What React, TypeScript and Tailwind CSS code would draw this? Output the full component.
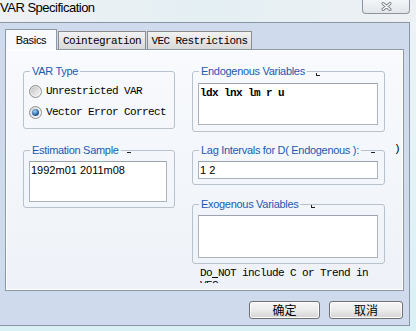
import type { ReactNode } from "react";

const mono = "font-['Liberation_Mono','DejaVu_Sans_Mono',monospace] text-[11px] tracking-[-0.6px] leading-[12px] text-black";
const sans = "font-['Liberation_Sans',Arial,sans-serif]";

function Radio({ checked, label }: { checked?: boolean; label: string }) {
  return (
    <div className="flex h-[20px] items-center pl-[5px]">
      <span className="flex h-[13px] w-[13px] items-center justify-center rounded-full border border-[#8e8f8f] bg-gradient-to-br from-[#d6d6d6] to-[#fdfdfd]">
        {checked ? (
          <span className="h-[7px] w-[7px] rounded-full bg-[radial-gradient(circle_at_40%_35%,#a6d6f7,#2f6aa6_55%,#0f3560)]" />
        ) : (
          <span className="h-[9px] w-[9px] rounded-full bg-gradient-to-br from-[#c4c4c4] to-[#f6f6f6]" />
        )}
      </span>
      <span className={`ml-[4px] ${mono}`}>{label}</span>
    </div>
  );
}

function Group({
  title,
  className,
  children,
}: {
  title: string;
  className: string;
  children: ReactNode;
}) {
  return (
    <fieldset className={`relative rounded-[3px] border border-[#b8c2cd] ${className}`}>
      <legend className={`ml-[6px] px-[2px] text-[11px] leading-[14px] tracking-[-0.3px] text-[#2159b0] ${sans}`}>
        {title}
      </legend>
      {children}
    </fieldset>
  );
}

// small stray marks that sit on the group box borders in the original dialog
function Mark({ className }: { className: string }) {
  return <span className={`absolute h-[3px] w-[4px] border-b border-l border-[#222] ${className}`} />;
}

function Box({ className, children }: { className: string; children?: ReactNode }) {
  return (
    <div className={`ml-[5px] border border-[#abb3be] border-t-[#9aa3ae] bg-white pl-[1px] ${className}`}>
      {children}
    </div>
  );
}

function Button({ label, className }: { label: string; className: string }) {
  return (
    <button
      className={`flex h-[18px] items-center justify-center rounded-[3px] border border-[#707070] bg-gradient-to-b from-[#f7f7f7] via-[#ebebeb] to-[#d4d4d4] font-['Noto_Sans_CJK_SC',sans-serif] text-[12px] leading-[14px] text-black shadow-[inset_0_0_0_1px_#fcfcfc] ${className}`}
    >
      {label}
    </button>
  );
}

export default function App() {
  return (
    <div className="h-[331px] w-[416px] overflow-hidden bg-gradient-to-b from-[#eef3f6] to-[#d9f0f5]">
      {/* title bar */}
      <div className="flex h-[22px] items-start justify-between bg-gradient-to-r from-[#eef1f4] via-[#e4eff3] to-[#eef1f4]">
        <span className={`text-[13px] leading-[16px] tracking-[-0.5px] text-black ${sans}`}>VAR Specification</span>
        <div className="mr-[6px] flex h-[14px] w-[48px] items-center justify-center rounded-b-[4px] border border-t-0 border-[#8d96a0] bg-gradient-to-b from-[#f3f5f7] to-[#e2e6ea]">
          <svg width="11" height="9" viewBox="0 0 11 9">
            <path d="M2 1.5 L9 7.5 M9 1.5 L2 7.5" stroke="#7b8088" strokeWidth="3" strokeLinecap="round" />
            <path d="M2 1.5 L9 7.5 M9 1.5 L2 7.5" stroke="#ffffff" strokeWidth="1.2" strokeLinecap="round" />
          </svg>
        </div>
      </div>

      {/* frame */}
      <div className="h-[304px] w-[410px] border-y border-r border-[#8a96a4] bg-[#cfdbec] pl-[5px] pt-[6px]">
        {/* tabs */}
        <div className="relative z-10 flex h-[20px] items-end">
          <div className={`-mb-px flex h-[21px] w-[52px] items-start justify-center border border-b-0 border-[#8c98a6] bg-[#f8fafd] pt-[3px] text-[11px] leading-[14px] tracking-[-0.3px] text-black ${sans}`}>
            Basics
          </div>
          <div className={`ml-px flex h-[18px] w-[88px] items-center justify-center border border-b-0 border-[#8c8c8c] bg-gradient-to-b from-[#f2f2f2] to-[#d9d9d9] ${mono}`}>
            Cointegration
          </div>
          <div className={`ml-px flex h-[18px] w-[105px] items-center justify-center border border-b-0 border-[#8c8c8c] bg-gradient-to-b from-[#f2f2f2] to-[#d9d9d9] ${mono}`}>
            VEC Restrictions
          </div>
        </div>

        {/* panel */}
        <div className="h-[242px] w-[399px] border border-[#8c98a6] bg-gradient-to-b from-[#f8fafd] to-[#eef2f8] shadow-[inset_1px_1px_0_#ffffff,inset_-1px_-1px_0_#ffffff]">
          <div className="flex gap-[17px] pl-[17px] pt-[14px]">
            {/* left column */}
            <div className="flex w-[152px] flex-col">
              <Group title="VAR Type" className="h-[65px]">
                <div className="mt-[3px]">
                  <Radio label="Unrestricted VAR" />
                  <div className="mt-[1px]">
                    <Radio checked label="Vector Error Correct" />
                  </div>
                </div>
              </Group>
              <Group title="Estimation Sample" className="mt-[14px] h-[65px]">
                <Mark className="left-[103px] top-[-7px] border-l-0" />
                <Box className="mt-[4px] h-[41px] w-[138px]">
                  <div className={`pt-[2px] text-[11px] leading-[12px] text-black ${sans}`}>1992m01 2011m08</div>
                </Box>
              </Group>
            </div>

            {/* right column */}
            <div className="flex w-[193px] flex-col">
              <Group title="Endogenous Variables" className="h-[68px]">
                <Mark className="left-[123px] top-[-5px]" />
                <Box className="mt-[5px] h-[42px] w-[180px]">
                  <div className={`pt-[3px] font-bold ${mono}`}>ldx lnx lm r u</div>
                </Box>
              </Group>
              <Group title="Lag Intervals for D( Endogenous ):" className="mt-[11px] h-[42px]">
                <Mark className="left-[178px] top-[-7px] border-l-0" />
                <span className={`absolute left-[201px] top-[-14px] ${mono}`}>)</span>
                <Box className="mt-[4px] h-[18px] w-[180px]">
                  <div className={`pt-[2px] text-[11px] leading-[12px] text-black ${sans}`}>1 2</div>
                </Box>
              </Group>
              <Group title="Exogenous Variables" className="mt-[12px] h-[67px]">
                <Mark className="left-[118px] top-[-6px]" />
                <Box className="mt-[4px] h-[43px] w-[180px]" />
              </Group>
              <div className={`ml-[8px] mt-[3px] h-[16px] w-[176px] overflow-hidden ${mono}`}>
                Do<span className="underline">&nbsp;</span>NOT include C or Trend in VEC
              </div>
            </div>
          </div>
        </div>

        {/* buttons */}
        <div className="mt-[10px] flex w-[398px] justify-end gap-[9px]">
          <Button label="确定" className="w-[71px]" />
          <Button label="取消" className="w-[74px]" />
        </div>
      </div>
    </div>
  );
}
